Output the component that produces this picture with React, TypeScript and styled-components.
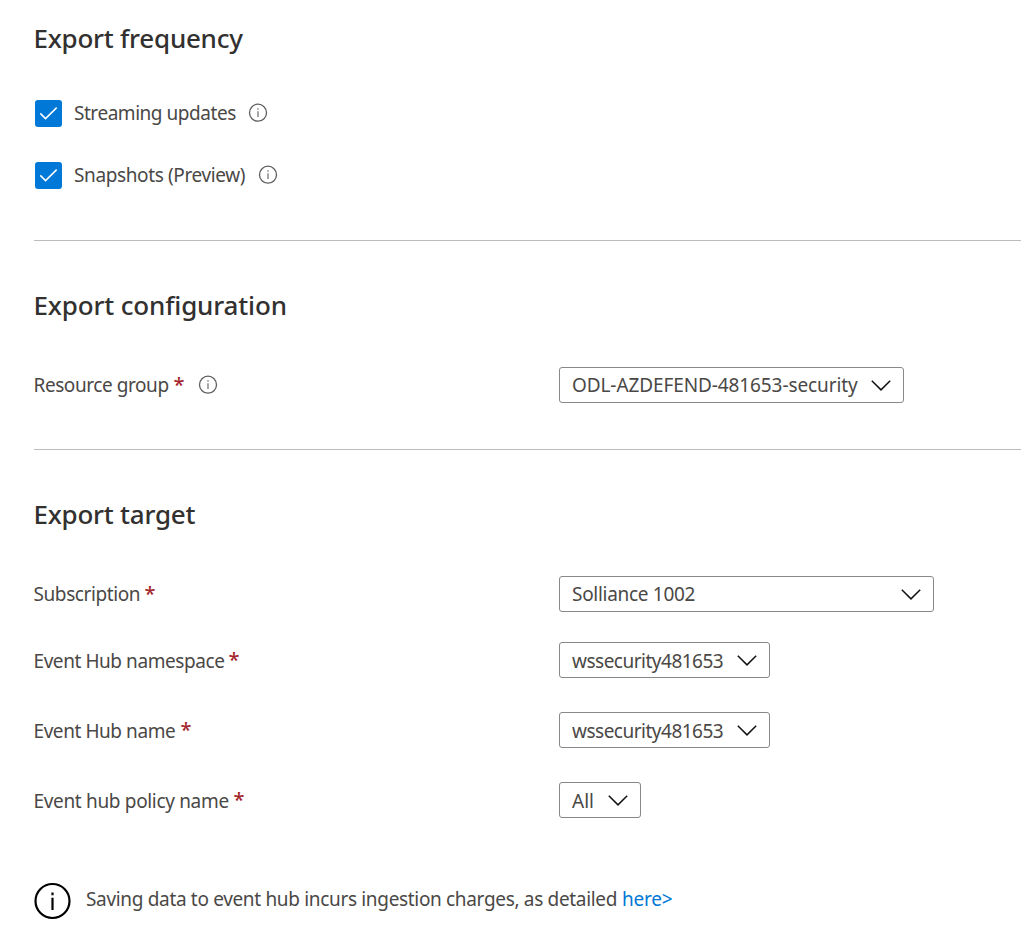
import React from "react";
import styled, { createGlobalStyle } from "styled-components";

const GlobalStyle = createGlobalStyle`
  * { box-sizing: border-box; }
  body { margin: 0; background: #fff; }
`;

const Page = styled.main`
  width: 1021px;
  height: 938px;
  overflow: hidden;
  padding-left: 34px;
  background: #fff;
  color: #4a4846;
  font-family: "Segoe UI", "Noto Sans", "Open Sans", sans-serif;
  font-size: 19px;
  line-height: 26px;
`;

const Section = styled.section<{ $height: number; $divided?: boolean }>`
  height: ${(p) => p.$height}px;
  border-bottom: ${(p) => (p.$divided ? "1px solid #bdbcbb" : "0")};
`;

const Heading = styled.h2<{ $top: number; $track?: number }>`
  margin: 0 0 0 -0.5px;
  padding-top: ${(p) => p.$top}px;
  padding-bottom: 1px;
  color: #323130;
  font-size: 26px;
  font-weight: 500;
  line-height: 36px;
  letter-spacing: ${(p) => p.$track ?? 0}px;
`;

const Text = styled.span<{ $width?: number; $track?: number }>`
  display: inline-block;
  flex: none;
  width: ${(p) => (p.$width ? `${p.$width}px` : "auto")};
  letter-spacing: ${(p) => p.$track ?? 0}px;
  white-space: nowrap;
`;

const CheckRow = styled.label<{ $gap: number }>`
  display: flex;
  align-items: center;
  height: 28px;
  margin-top: ${(p) => p.$gap}px;
  padding-left: 1px;
`;

const CheckBox = styled.span`
  display: flex;
  flex: none;
  width: 27px;
  height: 27px;
  margin-right: 12px;
  border-radius: 3px;
  background: #0078d7;
`;

const Field = styled.div<{ $gap: number; $drop: number }>`
  display: grid;
  grid-template-columns: 525px auto;
  justify-content: start;
  align-items: center;
  height: 36px;
  margin-top: ${(p) => p.$gap}px;

  ${Text} {
    padding-top: ${(p) => p.$drop}px;
  }
`;

const Label = styled.div`
  display: flex;
  align-items: center;
  margin-left: -0.5px;
`;

const Star = styled.span`
  width: 11px;
  margin-left: 5px;
  padding-bottom: 1px;
  color: #a4262c;
  font-size: 20px;
  font-weight: 500;
`;

const Select = styled.button<{ $width: number }>`
  display: flex;
  align-items: center;
  justify-content: space-between;
  width: ${(p) => p.$width}px;
  height: 36px;
  padding: 0 12px;
  border: 1px solid #8a8886;
  border-radius: 3px;
  background: #fff;
  color: inherit;
  font: inherit;
`;

const Notice = styled.div`
  display: flex;
  align-items: center;
  height: 38px;
`;

const NoticeText = styled.p`
  display: flex;
  margin: 0 0 0 14px;
  padding-bottom: 4px;
`;

const Link = styled.a`
  margin-left: 5px;
  color: #0078d4;
  letter-spacing: -0.2px;
  text-decoration: none;
`;

const Icon = styled.svg<{ $left?: number }>`
  display: block;
  flex: none;
  margin-left: ${(p) => p.$left ?? 0}px;
`;

const CheckMark = () => (
  <Icon width="27" height="27" viewBox="0 0 27 27" fill="none">
    <path d="M5.3 13.4l5.2 5.2L21.7 7.6" stroke="#fff" strokeWidth="1.5" />
  </Icon>
);

const Info = ({ left }: { left: number }) => (
  <Icon $left={left} width="20" height="20" viewBox="0 0 20 20" fill="none">
    <circle cx="10" cy="9.7" r="8.5" stroke="#605e5c" strokeWidth="1.3" />
    <path d="M10 8.3v5.6M10 5.3v1.5" stroke="#797775" strokeWidth="1.3" />
  </Icon>
);

const BigInfo = () => (
  <Icon width="38" height="38" viewBox="0 0 38 38" fill="none">
    <circle cx="18.5" cy="19" r="17" stroke="#000" strokeWidth="2.2" />
    <path d="M18.5 15.8v12.2M18.5 10.4v2.8" stroke="#000" strokeWidth="2.2" />
  </Icon>
);

const Chevron = () => (
  <Icon width="20" height="12" viewBox="0 0 20 12" fill="none">
    <path d="M.8 1.7L10 10.9l9.2-9.2" stroke="#111" strokeWidth="1.5" />
  </Icon>
);

interface FieldProps {
  label: string;
  labelWidth: number;
  labelTrack?: number;
  value: string;
  valueTrack?: number;
  width: number;
  gap: number;
  drop?: number;
  info?: boolean;
}

const SelectField = (p: FieldProps) => (
  <Field $gap={p.gap} $drop={p.drop ?? 0}>
    <Label>
      <Text $width={p.labelWidth} $track={p.labelTrack}>{p.label}</Text>
      <Star>*</Star>
      {p.info && <Info left={13.5} />}
    </Label>
    <Select $width={p.width}>
      <Text $track={p.valueTrack}>{p.value}</Text>
      <Chevron />
    </Select>
  </Field>
);

export default function App() {
  return (
    <>
      <GlobalStyle />
      <Page>
        <Section $height={241} $divided>
          <Heading $top={20} $track={-0.25}>Export frequency</Heading>
          <CheckRow $gap={42}>
            <CheckBox><CheckMark /></CheckBox>
            <Text $width={162} $track={-0.46}>Streaming updates</Text>
            <Info left={12} />
          </CheckRow>
          <CheckRow $gap={34}>
            <CheckBox><CheckMark /></CheckBox>
            <Text $width={172} $track={-0.38}>Snapshots (Preview)</Text>
            <Info left={12} />
          </CheckRow>
        </Section>
        <Section $height={209} $divided>
          <Heading $top={46} $track={-0.16}>Export configuration</Heading>
          <SelectField gap={43} label="Resource group" labelWidth={135} labelTrack={-0.43} value="ODL-AZDEFEND-481653-security" valueTrack={-0.1} width={345} info />
        </Section>
        <Section $height={432}>
          <Heading $top={46} $track={-0.25}>Export target</Heading>
          <SelectField gap={43} label="Subscription" labelWidth={106} labelTrack={-0.4} value="Solliance 1002" valueTrack={-0.3} width={375} />
          <SelectField gap={30} drop={2} label="Event Hub namespace" labelWidth={190} labelTrack={-0.43} value="wssecurity481653" valueTrack={-0.5} width={211} />
          <SelectField gap={34} drop={2} label="Event Hub name" labelWidth={142} labelTrack={-0.43} value="wssecurity481653" valueTrack={-0.5} width={211} />
          <SelectField gap={34} drop={2} label="Event hub policy name" labelWidth={195} labelTrack={-0.33} value="All" width={82} />
        </Section>
        <Notice>
          <BigInfo />
          <NoticeText>
            <Text $width={531} $track={-0.33}>Saving data to event hub incurs ingestion charges, as detailed</Text>
            <Link href="#">here&gt;</Link>
          </NoticeText>
        </Notice>
      </Page>
    </>
  );
}
